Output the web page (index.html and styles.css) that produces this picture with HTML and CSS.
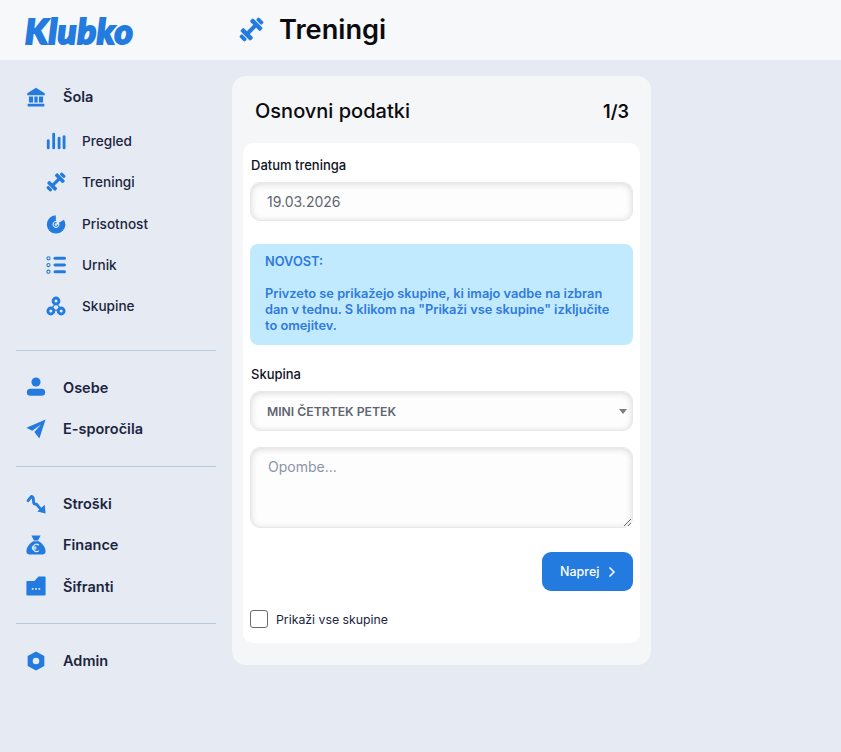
FILE: index.html
```html
<!DOCTYPE html>
<html>
<head>
  <title>Klubko - Treningi</title>
  <meta name="viewport" content="width=device-width, initial-scale=1">
  <link rel="stylesheet" href="styles.css">
</head>
<body>
  <svg class="sprite" width="0" height="0">
    <symbol id="i-dumbbell" viewBox="1.500 1.500 21 21">
      <g fill="#237bdf" transform="rotate(-45 12 12)">
        <rect x="7" y="10.300" width="10" height="3.400"/>
        <rect x="4.400" y="6" width="3.800" height="12" rx="1.100"/>
        <rect x="15.800" y="6" width="3.800" height="12" rx="1.100"/>
        <rect x="0.400" y="8.800" width="3.200" height="6.400" rx="1.100"/>
        <rect x="20.400" y="8.800" width="3.200" height="6.400" rx="1.100"/>
      </g>
    </symbol>
  </svg>

  <header class="topbar">
    <div class="logo-box"><span class="logo">Klubko</span></div>
    <div class="page-title">
      <svg class="title-icon" viewBox="0 0 24 24"><use href="#i-dumbbell"/></svg>
      <h1>Treningi</h1>
    </div>
  </header>

  <div class="layout">
    <nav class="sidebar">
      <div class="nav-group first">
        <a class="nav-item">
          <svg class="icon" viewBox="0 0 24 24"><path fill="#237bdf" d="M12 1 1.500 7.500V10h21V7.500zM3.500 11.500h5v7h-5zM10 11.500h4v7h-4zM15.500 11.500h5v7h-5zM2 20h20v3.500H2z"/></svg>
          Šola
        </a>
        <div class="sub-items">
          <a class="nav-item sub">
            <svg class="icon" viewBox="0 0 24 24"><g fill="#237bdf"><rect x="1" y="10" width="3.400" height="12" rx="1.700"/><rect x="7.500" y="2" width="3.400" height="20" rx="1.700"/><rect x="14" y="7" width="3.400" height="15" rx="1.700"/><rect x="20" y="5" width="3.400" height="17" rx="1.700"/></g></svg>
            Pregled
          </a>
          <a class="nav-item sub">
            <svg class="icon" viewBox="0 0 24 24"><use href="#i-dumbbell"/></svg>
            Treningi
          </a>
          <a class="nav-item sub">
            <svg class="icon" viewBox="0 0 24 24"><circle cx="12" cy="12.500" r="7.500" fill="none" stroke="#237bdf" stroke-width="7" stroke-dasharray="38 9.100" stroke-dashoffset="-2" transform="rotate(-45 12 12.500)"/><circle cx="12" cy="12.500" r="2.200" fill="none" stroke="#237bdf" stroke-width="1.300" stroke-dasharray="10 4"/></svg>
            Prisotnost
          </a>
          <a class="nav-item sub">
            <svg class="icon" viewBox="0 0 24 24"><g fill="#237bdf"><rect x="9" y="2.200" width="15" height="3.600" rx="1.800"/><rect x="9" y="10.200" width="15" height="3.600" rx="1.800"/><rect x="9" y="18.200" width="15" height="3.600" rx="1.800"/></g><g fill="none" stroke="#237bdf" stroke-width="1.300"><circle cx="3" cy="4" r="1.900"/><circle cx="3" cy="12" r="1.900"/><circle cx="3" cy="20" r="1.900"/></g></svg>
            Urnik
          </a>
          <a class="nav-item sub">
            <svg class="icon" viewBox="0 0 24 24"><path fill="none" stroke="#237bdf" stroke-width="1.500" d="M12 7 6 17h12z"/><g fill="#237bdf"><circle cx="12" cy="6" r="5.300"/><circle cx="5.800" cy="18" r="5.300"/><circle cx="18.200" cy="18" r="5.300"/></g><g fill="#e6ebf3"><circle cx="12" cy="6" r="1.800"/><circle cx="5.800" cy="18" r="1.800"/><circle cx="18.200" cy="18" r="1.800"/></g></svg>
            Skupine
          </a>
        </div>
      </div>

      <div class="nav-group">
        <a class="nav-item">
          <svg class="icon" viewBox="0 0 24 24"><g fill="#237bdf"><circle cx="12" cy="6" r="5.500"/><rect x="1" y="14" width="22" height="8.500" rx="4.200"/></g></svg>
          Osebe
        </a>
        <a class="nav-item">
          <svg class="icon" viewBox="0 0 24 24"><path fill="#237bdf" d="M23.500.500.500 10.500l7 3.500L18 6.500 10 15.500 16 23.500z"/></svg>
          E-sporočila
        </a>
      </div>

      <div class="nav-group">
        <a class="nav-item">
          <svg class="icon" viewBox="0 0 24 24"><path fill="none" stroke="#237bdf" stroke-width="3.400" stroke-linecap="round" stroke-linejoin="round" d="M2.500 8 6.500 3c2 0 2.500 2.500 2.500 5s0 4 2 4 2.500 1 3.500 2.500l4 4.500"/><path fill="#237bdf" d="M23.500 23.500 13.500 21l9-8z"/></svg>
          Stroški
        </a>
        <a class="nav-item">
          <svg class="icon" viewBox="0 0 24 24"><path fill="#237bdf" d="M6.500.500h11l-3 6h-5zM8.500 7.500h7C20 10.500 23.500 15 23.500 19.500c0 2.500-1.500 4-4 4h-15c-2.500 0-4-1.500-4-4C.500 15 4 10.500 8.500 7.500z"/><path fill="none" stroke="#e6ebf3" stroke-width="1.400" d="M15.500 12.300a4.300 4.300 0 1 0 0 6.400M7 14.600h5.500M7 16.600h5.500"/></svg>
          Finance
        </a>
        <a class="nav-item">
          <svg class="icon" viewBox="0 0 24 24"><path fill="#237bdf" d="M.500 7a1 1 0 0 1 1-1H10l5-5.500h7.500a1 1 0 0 1 1 1V22.500a1 1 0 0 1-1 1h-21a1 1 0 0 1-1-1z"/><g fill="#e6ebf3"><rect x="7" y="14.500" width="2" height="2"/><rect x="11" y="14.500" width="2" height="2"/><rect x="15" y="14.500" width="2" height="2"/></g></svg>
          Šifranti
        </a>
      </div>

      <div class="nav-group last">
        <a class="nav-item">
          <svg class="icon" viewBox="0 0 24 24"><path fill="#237bdf" fill-rule="evenodd" d="M12 .500 22 6v12l-10 5.500L2 18V6zM12 8a4 4 0 1 0 0 8 4 4 0 0 0 0-8z"/></svg>
          Admin
        </a>
      </div>
    </nav>

    <main class="card">
      <div class="card-head">
        <h2>Osnovni podatki</h2>
        <span class="step">1/3</span>
      </div>
      <form class="card-body">
        <label class="field-label" for="datum">Datum treninga</label>
        <input class="field" id="datum" type="text" value="19.03.2026">

        <div class="notice">
          <p>NOVOST:</p>
          <p>Privzeto se prikažejo skupine, ki imajo vadbe na izbran dan v tednu. S klikom na "Prikaži vse skupine" izključite to omejitev.</p>
        </div>

        <label class="field-label" for="skupina">Skupina</label>
        <div class="select-wrap">
          <select class="field select" id="skupina">
            <option>MINI ČETRTEK PETEK</option>
          </select>
        </div>

        <textarea class="field notes" placeholder="Opombe..."></textarea>

        <div class="actions">
          <button class="next-btn" type="button">
            Naprej
            <svg class="chevron" viewBox="0 0 10 12"><path fill="none" stroke="#fff" stroke-width="1.500" d="M2.500 1.500 7 6l-4.500 4.500"/></svg>
          </button>
        </div>

        <label class="check-row">
          <input class="check" type="checkbox">
          Prikaži vse skupine
        </label>
      </form>
    </main>
  </div>
</body>
</html>
```
FILE: styles.css
```css
* {
  box-sizing: border-box;
}
body {
  margin: 0;
  min-height: 752px;
  background-color: #e6ebf3;
  font-family: "Inter", "Noto Sans", sans-serif;
  color: #1c2540;
}
.sprite {
  display: block;
}

/* Top bar */
.topbar {
  display: flex;
  align-items: center;
  height: 60px;
  background-color: #f6f8fa;
}
.logo-box {
  width: 232px;
  padding-left: 25px;
}
.logo {
  font-family: "Lato", sans-serif;
  font-size: 35px;
  font-weight: 900;
  font-style: italic;
  letter-spacing: 0.600px;
  color: #237bdf;
  -webkit-text-stroke: 2px #237bdf;
}
.page-title {
  display: flex;
  align-items: center;
  gap: 15px;
  padding-left: 7px;
}
.title-icon {
  width: 25px;
  height: 25px;
  margin-top: -2px;
}
.page-title h1 {
  margin: -2px 0 0;
  font-size: 27.200px;
  font-weight: 600;
  color: #0b0b0f;
}

/* Sidebar */
.layout {
  display: flex;
  align-items: flex-start;
}
.sidebar {
  width: 232px;
  padding: 16px 16px 0;
}
.nav-group {
  padding-bottom: 16.500px;
  margin-bottom: 16px;
  border-bottom: 1px solid #b5cbe0;
}
.nav-group.first {
  padding-bottom: 23px;
}
.nav-group.last {
  border-bottom: none;
  margin-bottom: 0;
}
.nav-item {
  display: flex;
  align-items: center;
  gap: 17px;
  height: 41.300px;
  padding-left: 10px;
  font-size: 14.500px;
  font-weight: 600;
  color: #1c2540;
}
.nav-item.sub {
  gap: 16px;
  padding-left: 30px;
  font-weight: 500;
  font-size: 13.600px;
}
.sub-items {
  padding-top: 3px;
}
.icon {
  flex: none;
  width: 20px;
  height: 20px;
}

/* Form card */
.card {
  width: 419px;
  height: 589px;
  margin-top: 16px;
  padding: 0 11px;
  background-color: #f4f6f8;
  border-radius: 14px;
}
.card-head {
  display: flex;
  justify-content: space-between;
  align-items: center;
  height: 67px;
  padding: 3px 11px 0 12px;
  color: #0b0b0f;
}
.card-head h2 {
  margin: 0;
  font-size: 20px;
  font-weight: 500;
}
.step {
  font-size: 18px;
  font-weight: 600;
}
.card-body {
  height: 500px;
  padding: 14px 7px 0;
  background-color: #fff;
  border-radius: 10px;
}
.field-label {
  display: block;
  margin-bottom: 9px;
  padding-left: 1px;
  font-size: 13px;
  font-weight: 500;
  color: #0e1326;
}
.field {
  display: block;
  width: 100%;
  height: 39px;
  padding: 0 16px;
  border: 1px solid #e8e8e8;
  border-radius: 10px;
  background-color: #fdfdfd;
  box-shadow: inset 0 1px 6px rgba(0, 0, 0, 0.15);
  font-family: inherit;
  font-size: 14px;
  color: #5f6672;
  outline: none;
}
.notice {
  margin: 23px 0 21px;
  padding: 10px 23px 11px 15px;
  background-color: #c2eaff;
  border-radius: 8px;
  font-size: 12.800px;
  font-weight: 600;
  line-height: 16px;
  color: #2f7ade;
}
.notice p {
  margin: 0 0 16px;
}
.notice p:last-child {
  margin-bottom: 0;
}
.select-wrap {
  position: relative;
}
.select-wrap::after {
  content: "";
  position: absolute;
  top: 18px;
  right: 6px;
  border-left: 4px solid transparent;
  border-right: 4px solid transparent;
  border-top: 5px solid #7d7d7d;
}
.select {
  appearance: none;
  height: 40px;
  font-size: 12.200px;
  font-weight: 600;
}
.notes {
  height: 81px;
  margin-top: 16px;
  padding: 10px 17px;
}
.notes::placeholder {
  color: #8a93a6;
}
.actions {
  display: flex;
  justify-content: flex-end;
  margin-top: 24px;
}
.next-btn {
  display: flex;
  align-items: center;
  gap: 8px;
  width: 91px;
  height: 39px;
  padding: 0 0 0 18px;
  border: none;
  border-radius: 9px;
  background-color: #237bdf;
  font-family: inherit;
  font-size: 12.500px;
  font-weight: 500;
  color: #fff;
}
.chevron {
  width: 10px;
  height: 12px;
}
.check-row {
  display: flex;
  align-items: center;
  gap: 8px;
  margin-top: 19px;
  font-size: 12.300px;
  color: #1c2540;
}
.check {
  appearance: none;
  width: 18px;
  height: 18px;
  margin: 0;
  border: 1px solid #6b6b6b;
  border-radius: 3px;
  background-color: #fff;
}
```
